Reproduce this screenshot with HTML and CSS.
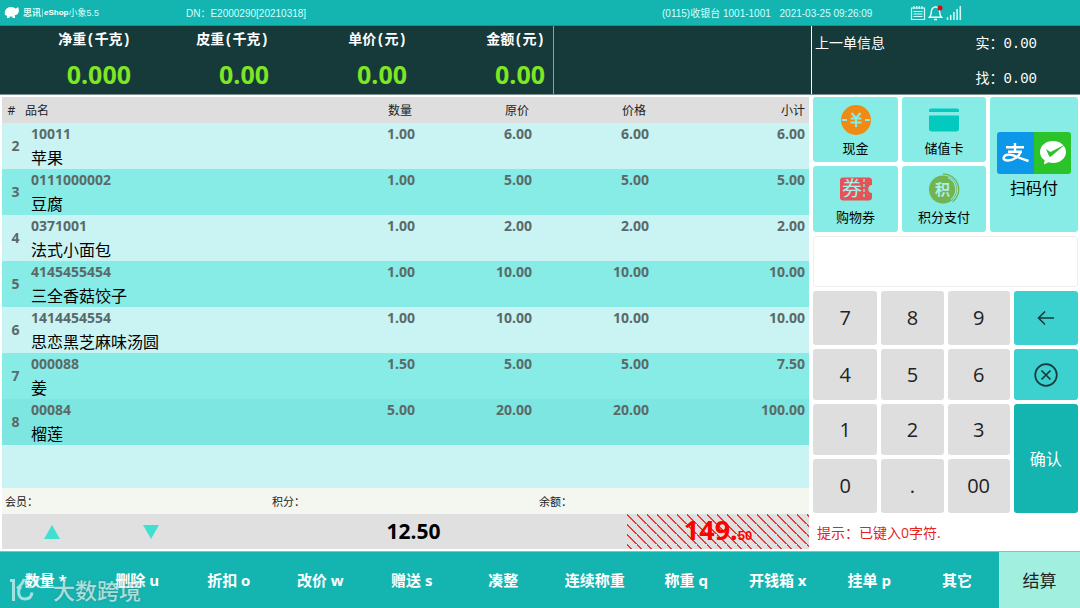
FILE: index.html
```html
<!DOCTYPE html>
<html lang="zh-CN">
<head>
    <meta charset="UTF-8">
    <meta name="viewport" content="width=device-width, initial-scale=1.0">
    <title>eShop小象5.5</title>
    <link rel="stylesheet" href="styles.css">
</head>
<body>
    <header class="topbar">
        <div class="brand">
            <svg class="brand-logo" viewBox="0 0 16 14" width="16" height="14">
                <path fill="#fff" d="M1 9C0 4 3 1 7 1c2 0 3 .6 4.200 1.400C12.500 2.200 13.200 2 14 1c1 1.200 1.400 4.500 0 6.500-.8 1.200-2 1.600-3 1.600V12H8.500v-1.500h-3V12H3V9.800L1 9z"/>
            </svg>
            <span class="brand-name"><b>思讯</b><i class="brand-line"></i><b class="brand-shop"><i>e</i>Shop</b>小象5.5</span>
        </div>
        <div class="device">DN：E2000290[20210318]</div>
        <div class="cashier">(0115)收银台 1001-1001 <time class="clock">2021-03-25 09:26:09</time></div>
        <div class="status">
            <svg viewBox="0 0 16 16" width="16" height="16" fill="none" stroke="#d5fffc" stroke-width="1.200">
                <path d="M1.500 3h13v11.500h-13zM4 1v3M6.700 1v3M9.300 1v3M12 1v3M3.500 6.500h9M3.500 9h9M3.500 11.500h9"/>
            </svg>
            <svg viewBox="0 0 16 16" width="16" height="16" fill="none" stroke="#fff" stroke-width="1.400">
                <path d="M1.500 12.300h12c-1.500-1.500-1.800-3-1.800-5C11.700 4 10 2 7.500 2S3.300 4 3.300 7.300c0 2-.3 3.500-1.800 5zM6 14.500h3"/>
                <circle cx="12" cy="3" r="2.500" fill="#e60012" stroke="none"/>
            </svg>
            <svg viewBox="0 0 16 16" width="16" height="16" stroke="#d5fffc" stroke-width="1.500">
                <path d="M1.500 15v-3M4.700 15v-5M7.900 15V7M11.100 15V4M14.300 15V1"/>
            </svg>
        </div>
    </header>

    <section class="scale">
        <div class="scale-values">
            <div class="scale-item"><span class="scale-label">净重(千克)</span><span class="scale-num">0.000</span></div>
            <div class="scale-item"><span class="scale-label">皮重(千克)</span><span class="scale-num">0.00</span></div>
            <div class="scale-item"><span class="scale-label">单价(元)</span><span class="scale-num">0.00</span></div>
            <div class="scale-item"><span class="scale-label">金额(元)</span><span class="scale-num">0.00</span></div>
        </div>
        <div class="last-order">
            <div>上一单信息</div>
            <div class="last-sums">
                <div>实：<span class="mono">0.00</span></div>
                <div>找：<span class="mono">0.00</span></div>
            </div>
        </div>
    </section>

    <main class="main">
        <section class="order">
            <div class="order-list">
                <table class="goods">
                    <thead>
                        <tr><th class="col-no">#</th><th class="col-name">品名</th><th class="col-num">数量</th><th class="col-num">原价</th><th class="col-num">价格</th><th class="col-sum">小计</th></tr>
                    </thead>
                    <tbody>
                        <tr><td class="no">2</td><td><div class="code">10011</div><div class="name">苹果</div></td><td class="num">1.00</td><td class="num">6.00</td><td class="num">6.00</td><td class="num">6.00</td></tr>
                        <tr><td class="no">3</td><td><div class="code">0111000002</div><div class="name">豆腐</div></td><td class="num">1.00</td><td class="num">5.00</td><td class="num">5.00</td><td class="num">5.00</td></tr>
                        <tr><td class="no">4</td><td><div class="code">0371001</div><div class="name">法式小面包</div></td><td class="num">1.00</td><td class="num">2.00</td><td class="num">2.00</td><td class="num">2.00</td></tr>
                        <tr><td class="no">5</td><td><div class="code">4145455454</div><div class="name">三全香菇饺子</div></td><td class="num">1.00</td><td class="num">10.00</td><td class="num">10.00</td><td class="num">10.00</td></tr>
                        <tr><td class="no">6</td><td><div class="code">1414454554</div><div class="name">思恋黑芝麻味汤圆</div></td><td class="num">1.00</td><td class="num">10.00</td><td class="num">10.00</td><td class="num">10.00</td></tr>
                        <tr><td class="no">7</td><td><div class="code">000088</div><div class="name">姜</div></td><td class="num">1.50</td><td class="num">5.00</td><td class="num">5.00</td><td class="num">7.50</td></tr>
                        <tr class="selected"><td class="no">8</td><td><div class="code">00084</div><div class="name">榴莲</div></td><td class="num">5.00</td><td class="num">20.00</td><td class="num">20.00</td><td class="num">100.00</td></tr>
                    </tbody>
                </table>
            </div>
            <div class="member">
                <div>会员：</div>
                <div>积分：</div>
                <div>余额：</div>
            </div>
            <div class="totals">
                <button class="page-btn" type="button" aria-label="上一页"><svg viewBox="0 0 16 14" width="16" height="14"><path fill="#40e0d0" d="M8 0l8 14H0z"/></svg></button>
                <button class="page-btn" type="button" aria-label="下一页"><svg viewBox="0 0 16 14" width="16" height="14"><path fill="#40e0d0" d="M8 14L0 0h16z"/></svg></button>
                <div class="total-qty">12.50</div>
                <div class="total-sum">149.<small>50</small></div>
            </div>
        </section>

        <aside class="side">
            <div class="pay">
                <button class="pay-btn" type="button">
                    <svg viewBox="0 0 32 32" width="32" height="32">
                        <circle cx="16" cy="16" r="15" fill="#f08a12"/>
                        <path fill="none" stroke="#87ebe6" stroke-width="2.200" d="M2 16h5M25 16h5M11.500 9l4.500 5 4.500-5M10.500 14.500h11M10.500 18.500h11M16 14v9"/>
                    </svg>
                    现金
                </button>
                <button class="pay-btn" type="button">
                    <svg viewBox="0 0 32 32" width="32" height="32">
                        <path fill="#04c9be" d="M1 8V6.500C1 5.500 2 4.500 3 4.500h26c1 0 2 1 2 2V8zM1 11.500h30V25c0 1.500-1 2.500-2.500 2.500h-25C2 27.500 1 26.500 1 25z"/>
                    </svg>
                    储值卡
                </button>
                <button class="pay-btn pay-scan" type="button">
                    <svg viewBox="0 0 74 42" width="74" height="42">
                        <path fill="#0c97e8" d="M3 0h34v42H3c-2 0-3-1-3-3V3c0-2 1-3 3-3z"/>
                        <path fill="#2ac32a" d="M37 0h34c2 0 3 1 3 3v36c0 2-1 3-3 3H37z"/>
                        <g fill="none" stroke="#fff" stroke-width="2.400">
                            <path d="M9 15.200h18M18 11v8.500M11 19.700h14"/>
                            <path d="M24 19.500c-2 5-7.500 9-13 9-3.500 0-5-1.500-4.200-3.300 1.200-3 6-3.200 10.200-1.500 5 2 9 3.500 14.500 5.300"/>
                        </g>
                        <path fill="#fff" d="M56 9c7.200 0 13 4.800 13 11s-5.800 11-13 11c-1.700 0-3-.2-4.500-.7L47 32.500l.6-4.200C44.600 26.300 43 23.500 43 20c0-6.200 5.800-11 13-11z"/>
                        <path fill="#2ac32a" d="M49 17l4.500 3L68 12.500 54 24.500c-.8.6-1.800.2-2.100-.7z"/>
                    </svg>
                    扫码付
                </button>
                <button class="pay-btn" type="button">
                    <svg viewBox="0 0 32 32" width="32" height="32">
                        <path fill="#e35457" d="M3 4.500h26c1.500 0 3 1 3 3V12c-5 0-5 8 0 8v4.500c0 2-1.500 3-3 3H3c-2 0-3-1-3-3v-17c0-2 1-3 3-3z"/>
                        <path stroke="#87ebe6" stroke-width="1.400" stroke-dasharray="3 2" d="M24 6v20"/>
                        <text class="ico-text" x="2" y="23" font-size="20" fill="#a9efeb">券</text>
                    </svg>
                    购物券
                </button>
                <button class="pay-btn" type="button">
                    <svg viewBox="0 0 32 32" width="32" height="32">
                        <circle cx="15" cy="16.500" r="14" fill="#72b450"/>
                        <path fill="none" stroke="#72b450" stroke-width="1.300" d="M15 .8a15.700 15.700 0 0 1 9.500 28.200"/>
                        <path fill="none" stroke="#87ebe6" stroke-width="1.200" d="M20 4.500a13 13 0 0 1 3 22"/>
                        <text class="ico-text" x="7" y="22" font-size="15" font-weight="bold" fill="#a9efeb">积</text>
                    </svg>
                    积分支付
                </button>
            </div>
            <input class="entry" type="text" aria-label="键入">
            <div class="keypad">
                <button class="key" type="button">7</button>
                <button class="key" type="button">8</button>
                <button class="key" type="button">9</button>
                <button class="key key-edit" type="button" aria-label="退格">
                    <svg viewBox="0 0 24 24" width="24" height="24" fill="none" stroke="#163a3a" stroke-width="1.600"><path d="M20 12H4.500M11 5.500L4.500 12l6.500 6.500"/></svg>
                </button>
                <button class="key" type="button">4</button>
                <button class="key" type="button">5</button>
                <button class="key" type="button">6</button>
                <button class="key key-edit" type="button" aria-label="清除">
                    <svg viewBox="0 0 24 24" width="24" height="24" fill="none" stroke="#163a3a" stroke-width="1.700"><circle cx="12" cy="12" r="10.800"/><path d="M7.500 7.500l9 9M16.500 7.500l-9 9"/></svg>
                </button>
                <button class="key" type="button">1</button>
                <button class="key" type="button">2</button>
                <button class="key" type="button">3</button>
                <button class="key key-ok" type="button">确认</button>
                <button class="key" type="button">0</button>
                <button class="key" type="button">.</button>
                <button class="key" type="button">00</button>
            </div>
            <p class="hint">提示：已键入0字符.</p>
        </aside>
    </main>

    <footer class="actions">
        <button class="action" type="button">数量 *</button>
        <button class="action" type="button">删除 u</button>
        <button class="action" type="button">折扣 o</button>
        <button class="action" type="button">改价 w</button>
        <button class="action" type="button">赠送 s</button>
        <button class="action" type="button">凑整</button>
        <button class="action" type="button">连续称重</button>
        <button class="action" type="button">称重 q</button>
        <button class="action" type="button">开钱箱 x</button>
        <button class="action" type="button">挂单 p</button>
        <button class="action" type="button">其它</button>
        <button class="action checkout" type="button">结算</button>
        <div class="watermark">
            <svg viewBox="0 0 44 26" width="44" height="26" fill="none" stroke="#fff" stroke-width="3">
                <path d="M1 3.500h3.500V24M15 2c-1 4-3.500 7-7 9.500M12 9.500c-4 4-3 12.500 4 12.500 4 0 6.500-2 7-6.500"/>
                <g stroke-width="1.500">
                    <circle cx="21" cy="6" r="4.500"/>
                    <circle cx="33" cy="6" r="4.500"/>
                </g>
            </svg>
            <span>大数跨境</span>
        </div>
    </footer>
</body>
</html>
```

FILE: styles.css
```css
*{
    box-sizing: border-box;
}
body{
    margin: 0;
    min-height: 100vh;
    display: flex;
    flex-direction: column;
    background: #fff;
    font-family: "Open Sans", "Noto Sans CJK SC", sans-serif;
}
button{
    border: 0;
    padding: 0;
    font-family: inherit;
    cursor: pointer;
}
svg{
    display: block;
}

/* top bar */
.topbar{
    height: 26px;
    display: grid;
    grid-template-columns: 182fr 476fr 248fr 170fr;
    align-items: center;
    padding-left: 4px;
    background: #14b5b1;
    border-bottom: 1px solid #129490;
    color: #d5fffc;
    font: 10px "Liberation Sans", "Noto Sans CJK SC", sans-serif;
}
.brand,
.brand-name,
.status{
    display: flex;
    align-items: center;
}
.brand{
    gap: 3px;
}
.brand-name{
    font-size: 9px;
}
.brand-line{
    height: 8px;
    margin: 0 1px;
    border-left: 1px solid #8adcd9;
}
.brand-shop{
    color: #fff;
    font-size: 8px;
}
.clock{
    margin-left: 6px;
}
.status{
    gap: 2px;
}

/* scale */
.scale{
    height: 69px;
    display: flex;
    justify-content: space-between;
    background: #163a3a;
    border-bottom: 1px solid #7d8f8f;
    color: #fff;
}
.scale-values{
    width: 554px;
    display: grid;
    grid-template-columns: repeat(4, 1fr);
    padding-right: 1px;
    border-right: 1px solid #8fa0a0;
}
.scale-item{
    display: flex;
    flex-direction: column;
    align-items: flex-end;
    padding: 4px 7px 0 0;
}
.scale-label{
    font: bold 14px/20px "Liberation Mono", "Noto Sans CJK SC", monospace;
}
.scale-num{
    color: #7ee625;
    font-size: 25px;
    font-weight: bold;
    line-height: 48px;
}
.last-order{
    width: 269px;
    display: flex;
    justify-content: space-between;
    padding: 0 43px 0 3px;
    border-left: 1px solid #fff;
    font-size: 14px;
    line-height: 34px;
}
.mono{
    font-family: "Liberation Mono", monospace;
}

/* order */
.main{
    flex: 1;
    display: flex;
    gap: 4px;
    padding: 2px;
}
.order{
    flex: 1;
    display: flex;
    flex-direction: column;
}
.order-list{
    flex: 1;
    background: #c9f4f3;
}
.goods{
    width: 100%;
    table-layout: fixed;
    border-collapse: collapse;
}
.goods th{
    height: 26px;
    padding: 2px 7px 0 0;
    background: #dedede;
    color: #222;
    font-size: 12px;
    font-weight: normal;
    line-height: 20px;
    text-align: right;
}
.goods .col-no{
    width: 23px;
    padding-right: 4px;
    text-align: center;
}
.goods .col-name{
    padding-right: 0;
    text-align: left;
}
.goods .col-num{
    width: 117px;
}
.goods .col-sum{
    width: 156px;
    padding-right: 4px;
}
.goods td{
    height: 46px;
    padding: 0 4px 0 6px;
    vertical-align: top;
    color: #5a6a69;
    font-size: 14px;
    font-weight: bold;
    line-height: 22px;
}
.goods .no{
    padding: 0 0 0 4px;
    text-align: center;
    vertical-align: middle;
}
.goods .num{
    text-align: right;
}
.goods .name{
    padding-top: 2px;
    color: #000;
    font-size: 16px;
    font-weight: normal;
    line-height: 22px;
}
.goods tbody tr:nth-child(even){
    background: #87ebe6;
}
.goods .selected{
    background: #7ee6e1;
}
.member{
    height: 26px;
    display: grid;
    grid-template-columns: repeat(3, 1fr);
    align-items: center;
    padding: 0 3px;
    background: #f3f7ef;
    color: #222;
    font-size: 11px;
}
.totals{
    height: 35px;
    display: grid;
    grid-template-columns: 99fr 99fr 427fr 182fr;
    background: #e0e0e0;
}
.page-btn{
    display: flex;
    align-items: center;
    justify-content: center;
    background: none;
}
.total-qty,
.total-sum{
    text-align: center;
    font-weight: bold;
    line-height: 35px;
}
.total-qty{
    font-size: 21px;
}
.total-sum{
    color: #f00;
    font-size: 27px;
    line-height: 32px;
    background-image: linear-gradient(45deg, #e0e0e0 45%, #e83a3a 45%, #e83a3a 55%, #e0e0e0 55%);
    background-size: 10px 10px;
}
.total-sum small{
    font: bold 13px "Liberation Sans", sans-serif;
}

/* payments and keypad */
.side{
    width: 265px;
    display: flex;
    flex-direction: column;
    gap: 4px;
}
.pay{
    display: grid;
    grid-template-columns: 85fr 84fr 88fr;
    grid-template-rows: 65px 66px;
    gap: 4px;
}
.pay-btn{
    display: flex;
    flex-direction: column;
    align-items: center;
    justify-content: center;
    gap: 2px;
    padding-top: 2px;
    border-radius: 3px;
    background: #87ebe6;
    color: #000;
    font-size: 13px;
    line-height: 20px;
}
.pay-scan{
    grid-column: 3;
    grid-row: 1 / 3;
    font-size: 16px;
    line-height: 24px;
}
.ico-text{
    font-family: "Noto Sans CJK SC", sans-serif;
}
.entry{
    width: 100%;
    height: 51px;
    padding: 0 8px;
    border: 1px solid #eee;
    border-radius: 3px;
    background: #fff;
    font-size: 20px;
}
.keypad{
    display: grid;
    grid-template-columns: 64fr 62fr 62fr 64fr;
    grid-template-rows: 54px 51px 51px 54px;
    gap: 4px;
}
.key{
    display: flex;
    align-items: center;
    justify-content: center;
    padding-bottom: 1px;
    border-radius: 3px;
    background: #dedede;
    color: #222;
    font-size: 20px;
}
.key-edit{
    padding-bottom: 0;
    background: #3cd0cf;
}
.key-ok{
    grid-column: 4;
    grid-row: 3 / 5;
    background: #14b5b1;
    color: #fff;
    font-size: 16px;
}
.hint{
    margin: 0;
    padding-left: 4px;
    color: #e62222;
    font-size: 14px;
    line-height: 32px;
}

/* bottom actions */
.actions{
    position: relative;
    height: 57px;
    display: grid;
    grid-template-columns: repeat(10, 183fr) 168fr 162fr;
    border-top: 1px solid #7fc4c2;
    background: #14b5b1;
}
.action{
    padding-bottom: 2px;
    background: none;
    color: #fff;
    font-size: 15px;
    font-weight: bold;
}
.checkout{
    background: #a1efdf;
    color: #222;
    font-size: 17px;
    font-weight: normal;
}
.watermark{
    position: absolute;
    left: 9px;
    bottom: 4px;
    display: flex;
    align-items: center;
    color: #fff;
    font-size: 22px;
    font-weight: 500;
    line-height: 28px;
    opacity: 0.6;
    text-shadow: 0 0 2px #555;
    pointer-events: none;
}
```
